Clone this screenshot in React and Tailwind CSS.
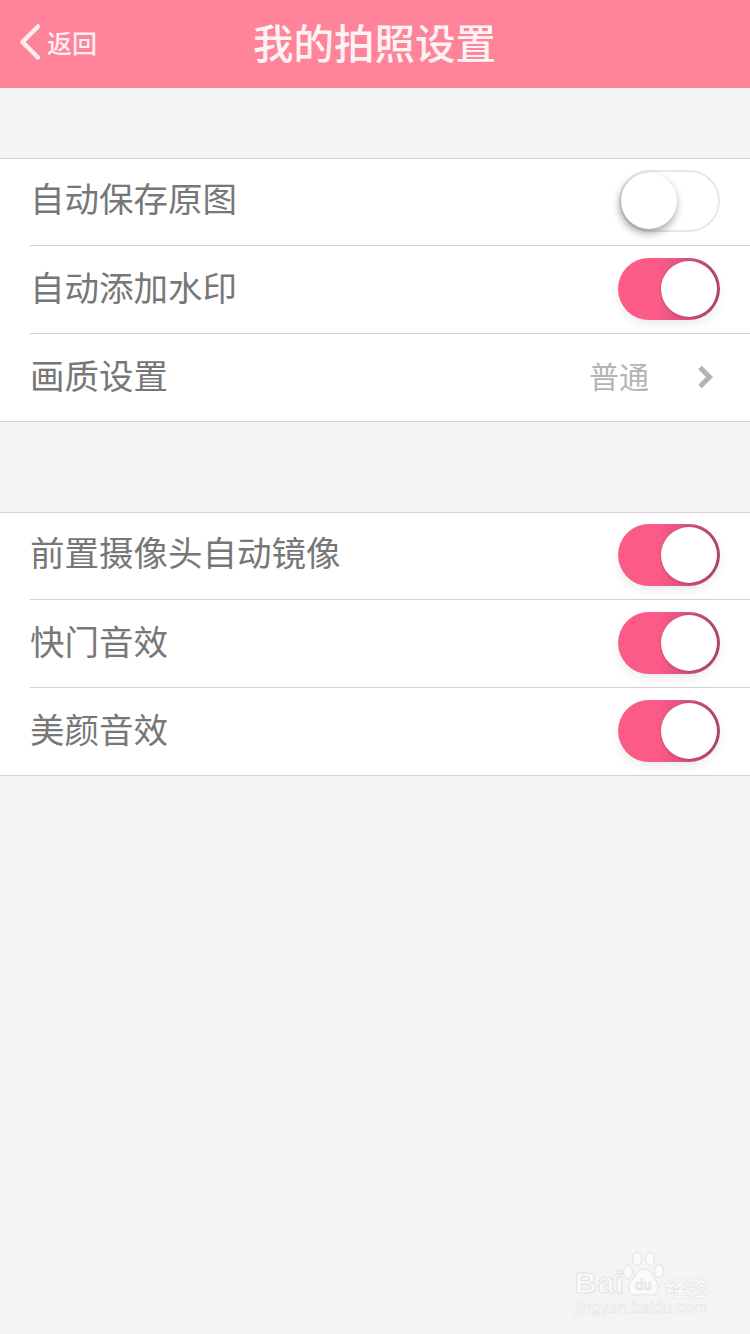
import React from 'react';

const font = { fontFamily: '"Noto Sans CJK SC", "Liberation Sans", sans-serif' };
const latin = { fontFamily: '"Liberation Sans", sans-serif' };

const Toggle = ({ on }) =>
  on ? (
    <div className="mr-[30px] flex h-[62px] w-[102px] shrink-0 items-center justify-end rounded-full bg-gradient-to-r from-[#fc5b88] from-40% to-[#b0476c] p-[3px] shadow-[0_5px_10px_rgba(0,0,0,0.07)]">
      <div className="h-[56px] w-[56px] rounded-full bg-white shadow-[0_1px_3px_rgba(90,20,50,0.3)]" />
    </div>
  ) : (
    <div className="mr-[30px] flex h-[62px] w-[101px] shrink-0 items-center justify-start rounded-full border-2 border-[#e8e8e8] bg-white">
      <div className="h-[56px] w-[56px] rounded-full bg-white shadow-[-1px_4px_8px_rgba(0,0,0,0.38)]" />
    </div>
  );

const Row = ({ label, last, children }) => (
  <div className={`ml-[30px] flex h-[87.33px] items-center justify-between pb-px first:pb-[3px] ${last ? '' : 'border-b border-[#d2d2d2]'}`}>
    <span className="mb-[6px] text-[34.5px] leading-none text-[#777777]">{label}</span>
    {children}
  </div>
);

const Section = ({ children }) => (
  <div className="border-y border-[#d2d2d2] bg-white">{children}</div>
);

export default function App() {
  return (
    <div className="relative h-[1334px] w-[750px] overflow-hidden bg-[#f4f4f5]" style={font}>
      {/* header */}
      <div className="grid h-[88px] grid-cols-[1fr_auto_1fr] items-center bg-[#ff8499] pb-[4px]">
        <div className="flex items-center pl-[19px]">
          <svg width="22" height="36" viewBox="0 0 22 36" fill="none">
            <path d="M19 2.5 L3.5 18 L19 33.5" stroke="#fdeef1" strokeWidth="4.5" strokeLinecap="round" strokeLinejoin="round" />
          </svg>
          <span className="ml-[6px] text-[25px] font-medium leading-none text-[#fdeef1]">返回</span>
        </div>
        <h1 className="-ml-[1px] text-[40.5px] font-medium leading-none text-[#fdf3f5]">我的拍照设置</h1>
        <div />
      </div>

      <div className="mt-[70px]">
        <Section>
          <Row label="自动保存原图"><Toggle on={false} /></Row>
          <Row label="自动添加水印"><Toggle on /></Row>
          <Row label="画质设置" last>
            <div className="flex items-center pr-[37px]">
              <span className="mb-[4px] text-[30px] leading-none text-[#b4b4b4]">普通</span>
              <svg className="ml-[48px]" width="16" height="24" viewBox="0 0 16 24" fill="none">
                <path d="M3 2.5 L12.5 12 L3 21.5" stroke="#b4b4b4" strokeWidth="5" />
              </svg>
            </div>
          </Row>
        </Section>
      </div>

      <div className="mt-[90px]">
        <Section>
          <Row label="前置摄像头自动镜像"><Toggle on /></Row>
          <Row label="快门音效"><Toggle on /></Row>
          <Row label="美颜音效" last><Toggle on /></Row>
        </Section>
      </div>

      {/* watermark */}
      <div className="absolute left-[575px] top-[1252px] flex w-[136px] flex-col whitespace-nowrap text-[#fbfbfb]">
        <div className="flex items-end">
          <span className="text-[30px] font-bold leading-none tracking-[1px] [-webkit-text-stroke:1px_#e2e2e2]" style={latin}>Bai</span>
          <div className="relative -ml-[3px] h-[46px] w-[44px] shrink-0">
            <svg width="44" height="46" viewBox="0 0 44 46" fill="#fbfbfb" stroke="#e2e2e2" strokeWidth="1">
              <ellipse cx="6" cy="20" rx="4.5" ry="6.5" />
              <ellipse cx="15" cy="7" rx="4.5" ry="6.5" />
              <ellipse cx="28" cy="7" rx="4.5" ry="6.5" />
              <ellipse cx="37" cy="19" rx="4.5" ry="6.5" />
              <path d="M22 17 C28 17 30 24 34 29 C39 36 35 44 28 43 C24 42 19 42 15 43 C8 44 4 36 9 29 C14 24 16 17 22 17 Z" />
            </svg>
            <span className="absolute bottom-[6px] left-[13px] text-[14px] font-bold leading-none text-[#f0f0f0] [-webkit-text-stroke:0.5px_#dcdcdc]" style={latin}>du</span>
          </div>
          <span className="text-[21px] font-bold leading-none [-webkit-text-stroke:0.5px_#e2e2e2]">经验</span>
        </div>
        <span className="mt-[2px] text-[16px] leading-none tracking-[0.2px] text-[#f8f8f8] [-webkit-text-stroke:0.5px_#e4e4e4]" style={latin}>jingyan.baidu.com</span>
      </div>
    </div>
  );
}
